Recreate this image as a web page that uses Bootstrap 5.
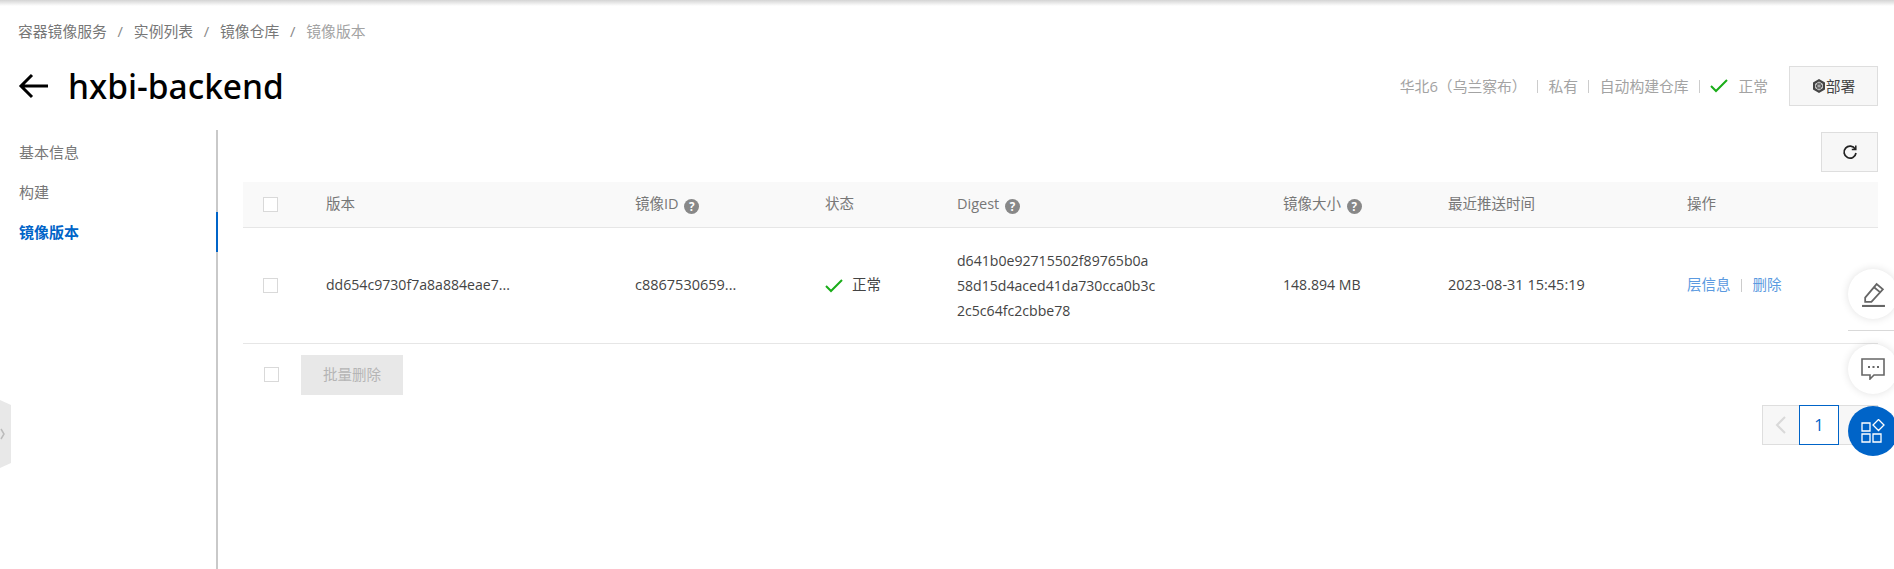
<!DOCTYPE html>
<html lang="zh-CN">
<head>
    <meta charset="UTF-8">
    <title>镜像版本</title>
    <link href="https://cdn.jsdelivr.net/npm/bootstrap@5.3.0/dist/css/bootstrap.min.css" rel="stylesheet">
    <script src="https://cdn.jsdelivr.net/npm/bootstrap@5.3.0/dist/js/bootstrap.bundle.min.js"></script>
    <style>
        html, body { height: 569px; overflow: hidden; }
        body {
            font-family: "Open Sans", "Noto Sans CJK SC", sans-serif;
            font-size: 14.5px;
            color: #333;
            background: #fff;
            position: relative;
        }
        .top-shade { height: 6px; background: linear-gradient(#d4d4d4, #fff); }

        .crumbs { height: 50px; padding-left: 18px; font-size: 14.8px; color: #777; gap: 10.8px; }
        .crumbs .sep { color: #888; }
        .crumbs .last { color: #a3a3a3; }

        .head-row { height: 74px; padding: 0 16px 14px 18px; }
        .head-title { font-size: 33.5px; font-weight: 500; color: #000; margin: 0 0 0 19px; line-height: 60px; font-family: "Noto Sans", "Open Sans", sans-serif; }
        .head-meta { color: #a3a3a3; font-size: 14.8px; }
        .meta-sep { width: 1px; height: 13px; background: #ccc; margin: 0 10.4px; }
        .meta-ok { margin-left: 10px; }
        .deploy-btn {
            width: 89px; height: 40px; margin-left: 21px; padding: 0;
            background: #f7f7f7; border: 1px solid #dedede; border-radius: 0;
            color: #444; font-size: 14.8px;
        }

        .page-body { height: 439px; }
        .side-nav { width: 218px; flex: none; border-right: 2px solid #c9c9c9; padding-top: 2px; position: relative; }
        .side-item { height: 40px; line-height: 40px; padding-left: 19px; color: #777; font-size: 15px; }
        .side-item.on { color: #0064c8; font-weight: 700; margin-right: -2px; border-right: 2px solid #0064c8; }

        .main-pane { flex: 1; padding: 2px 16px 0 25px; min-width: 0; }
        .refresh-btn {
            width: 57px; height: 40px; padding: 0;
            background: #f7f7f7; border: 1px solid #dedede; border-radius: 0;
        }

        .img-table { table-layout: fixed; width: 1635px; margin: 10px 0 0; }
        .img-table th, .img-table td { padding: 0; border-bottom: 1px solid #e6e6e6; vertical-align: middle; color: #444; background: transparent; box-shadow: none; }
        .img-table th { height: 45px; background: #f9f9f9; color: #777; font-weight: 400; }
        .img-table td { height: 116px; }
        .c1 { width: 83px; padding-left: 20px !important; }
        .c2 { width: 309px; }
        .c3 { width: 190px; }
        .c4 { width: 132px; }
        .c5 { width: 326px; }
        .c6 { width: 165px; }
        .c7 { width: 239px; }
        .c8 { width: 191px; }
        .digest { line-height: 25px; }
        .narrow-txt { font-size: 14.1px; }
        .ok-mark { margin-right: 9px; }

        .box { display: block; width: 15px; height: 15px; background: #fff; border: 1px solid #d9d9d9; }
        .hint {
            display: inline-block; width: 15px; height: 15px; border-radius: 50%;
            background: #888; color: #fff; font-size: 11.5px; font-weight: 700;
            line-height: 15px; text-align: center; margin-left: 2px; vertical-align: -2px;
        }
        .act { color: #5b9ae0; }
        .act-sep { display: inline-block; width: 1px; height: 13px; background: #ccc; margin: 0 11px 0 10px; vertical-align: -2px; }

        .foot-row { padding: 11px 0 0 21px; gap: 22px; }
        .batch-btn {
            width: 102px; height: 40px; padding: 0; border: 0; border-radius: 0;
            background: #e8e8e8; color: #b5b5b5; font-size: 14.5px;
        }
        .pager { height: 40px; margin-top: 10px; width: 116px; margin-left: auto; border: 1px solid #dedede; background: #f7f7f7; }
        .pager-prev { width: 36px; }
        .pager-cur { width: 40px; height: 40px; margin-top: -1px; background: #fff; border: 1px solid #0064c8; color: #0064c8; text-align: center; line-height: 38px; font-size: 16.5px; }

        .float-dock { position: absolute; right: -4px; top: 269px; width: 50px; }
        .dock-btn { width: 50px; height: 50px; border-radius: 50%; background: #fff; box-shadow: 0 0 8px rgba(0,0,0,.12); }
        .dock-btn.blue { background: #0064c8; margin-top: 12px; box-shadow: none; }
        .dock-line { height: 1px; background: #d9d9d9; margin: 11px 0 13px; }

        .side-handle { position: absolute; left: 0; top: 400px; }
    </style>
</head>
<body>
    <div class="top-shade"></div>

    <div class="crumbs d-flex align-items-center">
        <span>容器镜像服务</span><span class="sep">/</span>
        <span>实例列表</span><span class="sep">/</span>
        <span>镜像仓库</span><span class="sep">/</span>
        <span class="last">镜像版本</span>
    </div>

    <div class="head-row d-flex align-items-center">
        <svg width="31" height="26" viewBox="0 0 31 26" fill="none" stroke="#000" stroke-width="3"><path d="M30 13H3M14 2L3 13l11 11"/></svg>
        <h1 class="head-title">hxbi-backend</h1>
        <div class="head-meta d-flex align-items-center ms-auto">
            <span>华北6（乌兰察布）</span><span class="meta-sep"></span>
            <span>私有</span><span class="meta-sep"></span>
            <span>自动构建仓库</span><span class="meta-sep"></span>
            <svg width="18" height="14" viewBox="0 0 18 14" fill="none" stroke="#1aad19" stroke-width="2"><path d="M1 7l5 5L17 1"/></svg>
            <span class="meta-ok">正常</span>
            <button class="deploy-btn d-flex align-items-center justify-content-center" type="button">
                <svg width="14" height="14" viewBox="0 0 14 14"><path d="M7 0l6 3.5v7L7 14l-6-3.5v-7z" fill="#444"/><path d="M7 3l3.4 2v4L7 11 3.6 9V5z" fill="none" stroke="#ccc"/><path d="M7 3v8M3.6 5l6.800 4M10.400 5L3.600 9" stroke="#ccc" stroke-width=".7"/></svg>
                <span>部署</span>
            </button>
        </div>
    </div>

    <div class="page-body d-flex">
        <div class="side-nav">
            <div class="side-item">基本信息</div>
            <div class="side-item">构建</div>
            <div class="side-item on">镜像版本</div>
        </div>
        <div class="main-pane">
            <div class="d-flex justify-content-end">
                <button class="refresh-btn d-flex align-items-center justify-content-center" type="button">
                    <svg width="16" height="16" viewBox="0 0 16 16" fill="none" stroke="#222" stroke-width="1.7"><path d="M13.2 5A6 6 0 1 0 14 9"/><path d="M13.8 1.500v4h-4" stroke-width="1.500"/></svg>
                </button>
            </div>
            <table class="table img-table">
                <thead>
                    <tr>
                        <th class="c1"><span class="box"></span></th>
                        <th class="c2">版本</th>
                        <th class="c3">镜像ID <span class="hint">?</span></th>
                        <th class="c4">状态</th>
                        <th class="c5">Digest <span class="hint">?</span></th>
                        <th class="c6">镜像大小 <span class="hint">?</span></th>
                        <th class="c7">最近推送时间</th>
                        <th class="c8">操作</th>
                    </tr>
                </thead>
                <tbody>
                    <tr>
                        <td class="c1"><span class="box"></span></td>
                        <td class="narrow-txt">dd654c9730f7a8a884eae7...</td>
                        <td>c8867530659...</td>
                        <td>
                            <svg class="ok-mark" width="18" height="14" viewBox="0 0 18 14" fill="none" stroke="#1aad19" stroke-width="2"><path d="M1 7l5 5L17 1"/></svg>正常
                        </td>
                        <td class="digest narrow-txt">d641b0e92715502f89765b0a<br>58d15d4aced41da730cca0b3c<br>2c5c64fc2cbbe78</td>
                        <td class="narrow-txt">148.894 MB</td>
                        <td>2023-08-31 15:45:19</td>
                        <td><span class="act">层信息</span><span class="act-sep"></span><span class="act">删除</span></td>
                    </tr>
                </tbody>
            </table>
            <div class="foot-row d-flex align-items-center">
                <span class="box"></span>
                <button class="batch-btn" type="button">批量删除</button>
            </div>
            <div class="pager d-flex">
                <div class="pager-prev d-flex align-items-center justify-content-center">
                    <svg width="12" height="20" viewBox="0 0 12 20" fill="none" stroke="#d9d9d9" stroke-width="2"><path d="M10 2L2 10l8 8"/></svg>
                </div>
                <div class="pager-cur">1</div>
            </div>
        </div>
    </div>

    <div class="float-dock">
        <div class="dock-btn d-flex align-items-center justify-content-center">
            <svg width="25" height="25" viewBox="0 0 24 24" fill="none" stroke="#666" stroke-width="1.7"><path d="M4 15L15 2l6 5-11 12H4z"/><path d="M12.500 5l6 5"/><path d="M1 23h22" stroke-width="2"/></svg>
        </div>
        <div class="dock-line"></div>
        <div class="dock-btn d-flex align-items-center justify-content-center">
            <svg width="24" height="22" viewBox="0 0 24 22" fill="none" stroke="#666" stroke-width="1.6"><path d="M1 1h22v16H13l-4 4v-4H1z"/><path d="M7 9h2M11.5 9h2M16 9h2" stroke-width="2"/></svg>
        </div>
        <div class="dock-btn blue d-flex align-items-center justify-content-center">
            <svg width="24" height="24" viewBox="0 0 24 24" fill="none" stroke="#fff" stroke-width="1.3"><path d="M1 4h8v8H1zM1 15h8v8H1zM12 15h8v8h-8zM17.500 0.500l5.500 5.500-5.500 5.500L12 6z"/></svg>
        </div>
    </div>

    <svg class="side-handle" width="11" height="68" viewBox="0 0 11 68"><path d="M0 0l11 5v58L0 68z" fill="#e8e8e8"/><path d="M1 29l3 5-3 5" fill="none" stroke="#bbb" stroke-width="1.500"/></svg>
</body>
</html>
